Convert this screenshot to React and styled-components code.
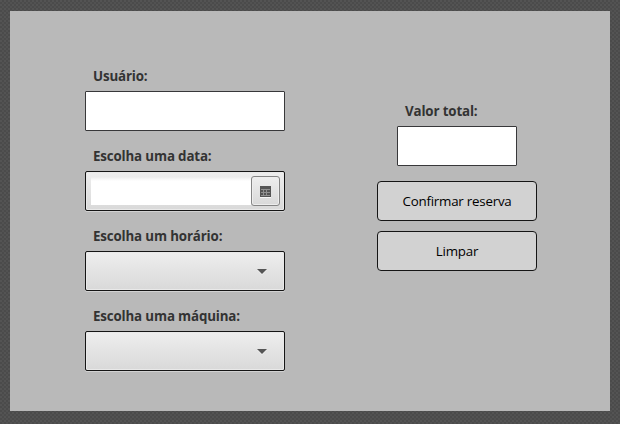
import React from "react";
import styled, { createGlobalStyle } from "styled-components";

const GlobalStyle = createGlobalStyle`
  * { box-sizing: border-box; }
  body { margin: 0; }
`;

const Frame = styled.div`
  width: 620px;
  height: 424px;
  padding: 11px 10px 13px;
  background-color: #4f4f4f;
  background-image:
    conic-gradient(#4b4b4b 25%, #525252 0 50%, #4b4b4b 0 75%, #545454 0);
  background-size: 4px 4px;
  font-family: "Open Sans", "Noto Sans", sans-serif;
`;

const Panel = styled.main`
  display: flex;
  align-items: flex-start;
  gap: 92px;
  height: 400px;
  padding: 50px 73px 0 75px;
  background: #b9b9b9;
`;

const Column = styled.section`
  display: flex;
  flex-direction: column;
  align-items: ${(p) => (p.$centered ? "center" : "stretch")};
  gap: 10px;
  width: ${(p) => p.$width}px;
  padding-top: ${(p) => p.$top || 0}px;
`;

const Group = styled.div`
  width: ${(p) => p.$width}px;
  margin-bottom: ${(p) => p.$after || 0}px;
`;

const Label = styled.label`
  display: block;
  height: 30px;
  padding-left: 8px;
  color: #333;
  font-size: 13.33px;
  font-weight: 700;
  line-height: 30px;
  letter-spacing: -0.15px;
  white-space: nowrap;
`;

const TextInput = styled.input`
  display: block;
  width: 100%;
  height: 40px;
  padding: 0 8px;
  border: 1px solid #38383a;
  border-radius: 1px;
  outline: 0;
  background: #fff;
`;

const SelectBox = styled.div`
  display: flex;
  align-items: center;
  justify-content: flex-end;
  height: 40px;
  padding-right: 17px;
  border: 1px solid #151515;
  border-radius: 2px;
  background: linear-gradient(#eee, #d9d9d9);
  box-shadow: inset 0 0 0 1px #e9e9e9, 0 1px 0 #d2d2d2;
`;

const DateBox = styled(SelectBox)`
  padding: 4px;
`;

const DateInput = styled.input`
  flex: 1;
  min-width: 0;
  height: 28px;
  margin-left: 1px;
  padding: 0 8px;
  border: 0;
  outline: 0;
  background: linear-gradient(#ececec, #fff 4px);
`;

const CalendarButton = styled.button`
  display: grid;
  place-items: center;
  width: 29px;
  height: 30px;
  padding: 2px 0 0;
  border: 1px solid #858585;
  border-radius: 3px;
  background: linear-gradient(#eee, #d9d9d9);
  box-shadow: inset 0 0 0 1px #ededed;
`;

const ActionButton = styled.button`
  width: 160px;
  height: 40px;
  padding: 0;
  border: 1px solid #151515;
  border-radius: 4px;
  background: #d2d2d2;
  color: #000;
  font-family: inherit;
  font-size: 13.33px;
  letter-spacing: -0.22px;
`;

const Arrow = () => (
  <svg width="11" height="8" viewBox="0 0 11 8">
    <path d="M1 3h10l-5 5z" fill="#efefef" />
    <path d="M1 2h10L6 7z" fill="#555" />
  </svg>
);

const Calendar = () => (
  <svg width="11" height="12" viewBox="0 0 11 12" shapeRendering="crispEdges">
    <path d="M0 11h11v1H0z" fill="#f8f8f8" />
    <path d="M0 0h11v11H0z" fill="#555" />
    <path d="M1 3.5h9M1 6.5h9M1 9.5h9M3.5 3v7M6.5 3v7" stroke="#909090" />
  </svg>
);

export default function App() {
  return (
    <>
      <GlobalStyle />
      <Frame>
        <Panel>
          <Column $width={200}>
            <Group>
              <Label htmlFor="user">Usuário:</Label>
              <TextInput id="user" />
            </Group>
            <Group>
              <Label htmlFor="date">Escolha uma data:</Label>
              <DateBox>
                <DateInput id="date" />
                <CalendarButton type="button"><Calendar /></CalendarButton>
              </DateBox>
            </Group>
            <Group>
              <Label>Escolha um horário:</Label>
              <SelectBox role="combobox"><Arrow /></SelectBox>
            </Group>
            <Group>
              <Label>Escolha uma máquina:</Label>
              <SelectBox role="combobox"><Arrow /></SelectBox>
            </Group>
          </Column>
          <Column $width={160} $top={35} $centered>
            <Group $width={120} $after={5}>
              <Label htmlFor="total">Valor total:</Label>
              <TextInput id="total" />
            </Group>
            <ActionButton type="button">Confirmar reserva</ActionButton>
            <ActionButton type="button">Limpar</ActionButton>
          </Column>
        </Panel>
      </Frame>
    </>
  );
}
